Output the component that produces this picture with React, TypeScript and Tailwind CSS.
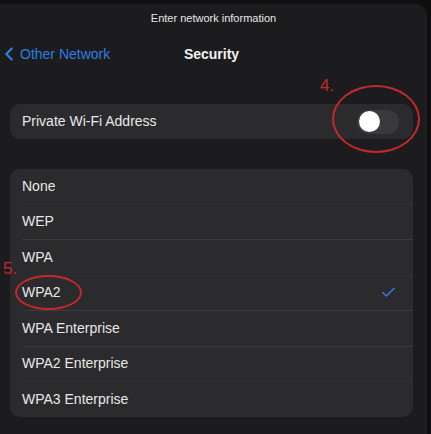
import { ChevronLeft, Check } from 'lucide-react';

const options = [
  { label: 'None', line: false },
  { label: 'WEP', line: true },
  { label: 'WPA', line: false },
  { label: 'WPA2', line: true, checked: true },
  { label: 'WPA Enterprise', line: true },
  { label: 'WPA2 Enterprise', line: false },
  { label: 'WPA3 Enterprise', line: false },
];

export default function App() {
  return (
    <div
      className="relative h-[434px] w-[431px] overflow-hidden bg-[#0f0f10] pt-[4px] pr-[4px] text-white"
      style={{ fontFamily: '"Liberation Sans", Arial, sans-serif' }}
    >
      <div className="flex h-full flex-col rounded-tr-[12px] bg-[#1c1c1e]">
        <div className="pt-[7px] text-center text-[11px] leading-[14px] text-[#e6e6e6]">
          Enter network information
        </div>

        <div className="mt-[18px] grid h-[20px] grid-cols-[1fr_auto_1fr] items-center pr-[4px]">
          <div className="flex items-center text-[#2d7ee0]">
            <ChevronLeft size={22} strokeWidth={2.4} className="-ml-[2px]" />
            <span className="text-[14px]">Other Network</span>
          </div>
          <div className="text-[14px] font-bold text-[#f2f2f2]">Security</div>
          <div />
        </div>

        <div className="ml-[10px] mr-[14px] mt-[41px] flex h-[35px] items-center justify-between rounded-[10px] bg-[#2b2b2d] pl-[12px] pr-[14px]">
          <span className="text-[14px] text-[#e8e8e8]">Private Wi-Fi Address</span>
          <div className="flex h-[24px] w-[42px] items-center rounded-full bg-[#3a3a3c] pl-[2px]">
            <div className="h-[21px] w-[21px] rounded-full bg-white" />
          </div>
        </div>

        <div className="ml-[10px] mr-[14px] mt-[30px] flex flex-col rounded-[10px] bg-[#2b2b2d]">
          {options.map((o, i) => (
            <div key={o.label} className="flex flex-col pl-[12px]">
              <div className="flex h-[34.5px] items-center justify-between pr-[16px]">
                <span className="text-[14px] text-[#e8e8e8]">{o.label}</span>
                {o.checked && <Check size={17} strokeWidth={2.2} className="text-[#2d7ee0]" />}
              </div>
              {i < options.length - 1 && (
                <div className={o.line ? 'h-px bg-[#3c3c3f]' : 'h-px bg-[#2f2f31]'} />
              )}
            </div>
          ))}
        </div>
      </div>

      {/* annotations */}
      <span className="absolute left-[320px] top-[76px] text-[17px] leading-[20px] text-[#c5282c]">4.</span>
      <div className="absolute left-[332px] top-[85px] h-[68px] w-[88px] rounded-[50%] border-2 border-[#c5282c]" />
      <span className="absolute left-[3px] top-[259px] text-[17px] leading-[20px] text-[#c5282c]">5.</span>
      <div className="absolute left-[15px] top-[275px] h-[35px] w-[67px] rounded-[50%] border-2 border-[#c5282c]" />
    </div>
  );
}
